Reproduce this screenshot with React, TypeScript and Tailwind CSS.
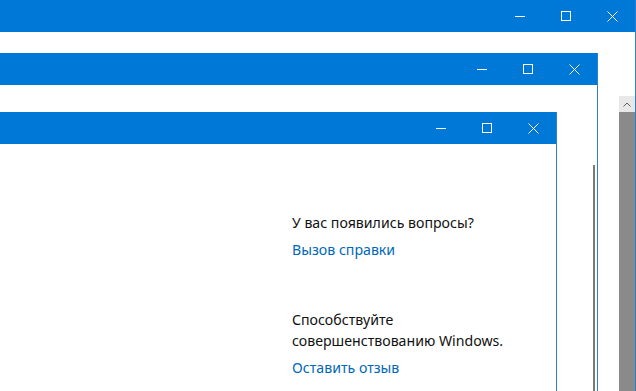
import React from "react";

const TitleButtons = () => (
  <div className="flex h-full">
    <div className="w-[46px] h-full flex items-center justify-center">
      <svg width="10" height="10" viewBox="0 0 10 10">
        <path d="M0 5.5H10" stroke="white" strokeWidth="1" />
      </svg>
    </div>
    <div className="w-[46px] h-full flex items-center justify-center">
      <svg width="10" height="10" viewBox="0 0 10 10">
        <rect x="0.5" y="0.5" width="9" height="9" stroke="white" strokeWidth="1" fill="none" />
      </svg>
    </div>
    <div className="w-[46px] h-full flex items-center justify-center">
      <svg width="11" height="11" viewBox="0 0 11 11">
        <path d="M0.5 0.5L10.5 10.5M10.5 0.5L0.5 10.5" stroke="white" strokeWidth="1" />
      </svg>
    </div>
  </div>
);

const TitleBar = () => (
  <div className="h-[32px] bg-[#0078d7] flex justify-end shrink-0">
    <TitleButtons />
  </div>
);

export default function App() {
  return (
    <div
      className="relative w-[636px] h-[391px] overflow-hidden bg-white"
      style={{ fontFamily: '"Noto Sans", "Open Sans", sans-serif' }}
    >
      {/* Window 1 */}
      <div className="absolute left-0 top-0 w-[636px] h-[420px] flex flex-col border-r border-[#2d7fcc] bg-white">
        <TitleBar />
        <div className="flex-1 flex justify-end">
          <div className="w-[16px] flex flex-col pt-[64px]">
            <div className="h-[16px] bg-[#e8e8e8] flex items-center justify-center">
              <svg width="8" height="5" viewBox="0 0 8 5">
                <path d="M0.5 4.5L4 1L7.5 4.5" stroke="#606060" strokeWidth="1" fill="none" />
              </svg>
            </div>
            <div className="flex-1 bg-[#8a8a8a]" />
          </div>
        </div>
      </div>

      {/* Window 2 */}
      <div className="absolute left-0 top-[53px] w-[598px] h-[400px] flex flex-col border-r border-[#2d7fcc] bg-white">
        <TitleBar />
        <div className="flex-1 flex justify-end pr-[2px]">
          <div className="w-[2px] mt-[80px] bg-[#7a7a7a]" />
        </div>
      </div>

      {/* Window 3 */}
      <div className="absolute left-0 top-[112px] w-[557px] h-[300px] flex flex-col border-r border-[#2d7fcc] bg-white">
        <TitleBar />
        <div className="flex-1 flex">
          <div className="flex-1" />
          <div className="w-[264px] pt-[68px] text-[14.15px] leading-[21px] text-[#111]">
            <div>У вас появились вопросы?</div>
            <div className="mt-[6px] text-[#0067b8]">Вызов справки</div>
            <div className="mt-[49px]">
              Способствуйте
              <br />
              совершенствованию Windows.
            </div>
            <div className="mt-[6px] text-[#0067b8]">Оставить отзыв</div>
          </div>
        </div>
      </div>
    </div>
  );
}
